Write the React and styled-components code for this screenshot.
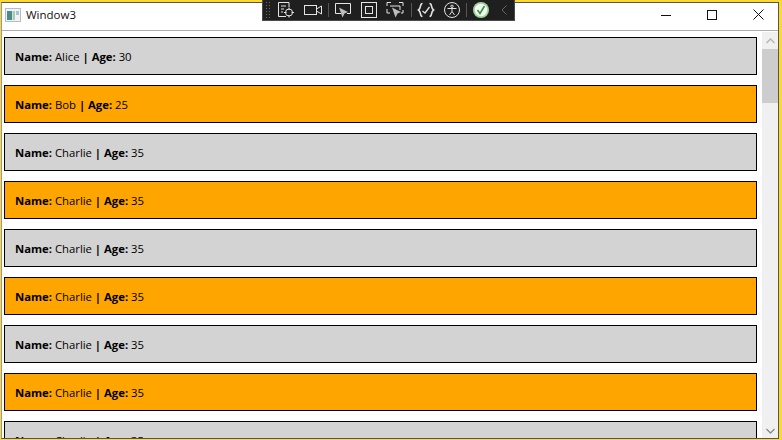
import React from 'react';
import styled, { createGlobalStyle } from 'styled-components';

const Global = createGlobalStyle`
  html, body { margin: 0; padding: 0; width: 782px; height: 440px; overflow: hidden; background: #fff; }
  #root { width: 782px; height: 440px; }
`;

const Frame = styled.div`
  position: relative;
  box-sizing: border-box;
  width: 782px;
  height: 440px;
  border-style: solid;
  border-color: #fdd835;
  border-width: 2px 3px 1px 1px;
  font-family: "Open Sans", "Noto Sans", sans-serif;
  color: #000;
`;

const Inner = styled.div`
  box-sizing: border-box;
  height: 100%;
  background: #fff;
  border: 1px solid #555;
  border-left-color: #9a9a9a;
  display: flex;
  flex-direction: column;
  overflow: hidden;
`;

const TitleBar = styled.header`
  flex: none;
  box-sizing: border-box;
  height: 28px;
  padding-bottom: 4px;
  display: flex;
  align-items: center;
  background: #fff;
  border-bottom: 1px solid #abadb3;
`;

const AppIcon = styled.svg`
  width: 16px;
  height: 16px;
  margin-left: 3px;
  flex: none;
`;

const Title = styled.span`
  margin-left: 5px;
  font-size: 11.5px;
  color: #111;
`;

const Controls = styled.div`
  margin-left: auto;
  margin-right: -3px;
  display: flex;
`;

const ControlButton = styled.div`
  width: 46px;
  height: 23px;
  display: flex;
  align-items: center;
  justify-content: center;
`;

const Body = styled.main`
  flex: 1;
  min-height: 0;
  display: flex;
`;

const List = styled.div`
  flex: 1;
  min-width: 0;
  overflow: hidden;
  padding: 6px 5px 0 2px;
  display: flex;
  flex-direction: column;
  gap: 10px;
`;

const Row = styled.div`
  flex: none;
  box-sizing: border-box;
  height: 38px;
  padding-left: 10px;
  display: flex;
  align-items: center;
  border: 1px solid #000;
  background: ${p => (p.$alt ? '#ffa500' : '#d3d3d3')};
  font-size: 11.3px;
  white-space: pre;
`;

const Strong = styled.b`
  font-weight: 700;
`;

const Scrollbar = styled.aside`
  flex: none;
  width: 16px;
  margin-top: 1px;
  background: #f0f0f0;
  display: flex;
  flex-direction: column;
`;

const ScrollArrow = styled.div`
  height: 17px;
  flex: none;
  display: flex;
  align-items: center;
  justify-content: center;
  padding-top: ${p => p.$shift || 0}px;
  box-sizing: border-box;
`;

const Thumb = styled.div`
  height: 54px;
  flex: none;
  background: #cdcdcd;
`;

const Spacer = styled.div`
  flex: 1;
`;

const Toolbar = styled.div`
  position: absolute;
  left: 261px;
  top: -2px;
  width: 253px;
  height: 21px;
  box-sizing: border-box;
  background: #1f1f1f;
  border: 1px solid #4a4a4a;
  border-top: 0;
  display: flex;
  align-items: center;
`;

const Grip = styled.div`
  width: 6px;
  height: 18px;
  margin: 0 5px 0 2px;
  flex: none;
  background-image: radial-gradient(#6a6a6a 0.6px, transparent 0.8px);
  background-size: 3px 3px;
`;

const ToolIcon = styled.svg`
  width: ${p => p.$w || 20}px;
  height: 18px;
  flex: none;
  margin-right: ${p => p.$gap || 0}px;
  fill: none;
  stroke: ${p => p.$stroke || '#e4e4e4'};
  stroke-width: 1;
`;

const ToolSep = styled.div`
  width: 1px;
  height: 14px;
  margin-right: ${p => p.$gap}px;
  background: #555;
  flex: none;
`;

const people = [
  ['Alice', 30], ['Bob', 25], ['Charlie', 35], ['Charlie', 35], ['Charlie', 35],
  ['Charlie', 35], ['Charlie', 35], ['Charlie', 35], ['Charlie', 35],
];

export default function App() {
  return (
    <>
      <Global />
      <Frame>
        <Inner>
          <TitleBar>
            <AppIcon viewBox="0 0 16 16">
              <rect x="0.5" y="1.5" width="15" height="13" fill="#f2f2f2" stroke="#b4bcc4" />
              <rect x="2" y="4" width="5" height="9" fill="#4d8a8c" />
              <rect x="7.5" y="4" width="2.5" height="9" fill="#a8cbb8" />
              <rect x="11" y="4" width="3" height="4" fill="#a9c0d6" />
            </AppIcon>
            <Title>Window3</Title>
            <Controls>
              <ControlButton>
                <svg width="10" height="10" viewBox="0 0 10 10"><path d="M0 5.5H10" stroke="#111" /></svg>
              </ControlButton>
              <ControlButton>
                <svg width="10" height="10" viewBox="0 0 10 10"><rect x="0.5" y="0.5" width="9" height="9" fill="none" stroke="#111" /></svg>
              </ControlButton>
              <ControlButton>
                <svg width="11" height="11" viewBox="0 0 11 11"><path d="M0.5 0.5L10.5 10.5M10.5 0.5L0.5 10.5" stroke="#111" /></svg>
              </ControlButton>
            </Controls>
          </TitleBar>
          <Body>
            <List>
              {people.map(([name, age], i) => (
                <Row key={i} $alt={i % 2 === 1}>
                  <Strong>Name: </Strong>{name}<Strong> | Age: </Strong>{age}
                </Row>
              ))}
            </List>
            <Scrollbar>
              <ScrollArrow>
                <svg width="9" height="6" viewBox="0 0 9 6"><path d="M0.5 5L4.5 1L8.5 5" fill="none" stroke="#b5b5b5" strokeWidth="1.3" /></svg>
              </ScrollArrow>
              <Thumb />
              <Spacer />
              <ScrollArrow $shift={2}>
                <svg width="9" height="6" viewBox="0 0 9 6"><path d="M0.5 1L4.5 5L8.5 1" fill="none" stroke="#8a8a8a" strokeWidth="1.3" /></svg>
              </ScrollArrow>
            </Scrollbar>
          </Body>
        </Inner>
        <Toolbar>
          <Grip />
          <ToolIcon viewBox="0 0 20 18" $gap={7}>
            <path d="M10 15.5H2.5V1.5H13V6" />
            <path d="M5 5H10M5 8H8M5 11H7" />
            <circle cx="13" cy="11.5" r="3.5" />
            <path d="M13 6.5V9M13 14V16.5M8 11.5H10.5M15.5 11.5H18" />
          </ToolIcon>
          <ToolIcon viewBox="0 0 20 18" $gap={5}>
            <rect x="1.5" y="4.5" width="12" height="9" />
            <path d="M13.5 8L18.5 5V13L13.5 10" />
          </ToolIcon>
          <ToolSep $gap={4} />
          <ToolIcon viewBox="0 0 20 18" $gap={7}>
            <path d="M8 12.5H2.5V2.5H17.5V12.5H14" />
            <path d="M6 6.5L15 11L11.5 12.5L9.5 16.5Z" fill="#bdbdbd" stroke="none" />
          </ToolIcon>
          <ToolIcon viewBox="0 0 18 18" $w={18} $gap={7}>
            <rect x="1.5" y="1.5" width="15" height="15" />
            <rect x="5.5" y="5.5" width="7" height="7" />
          </ToolIcon>
          <ToolIcon viewBox="0 0 20 18" $gap={6}>
            <path d="M2 5V1.5H6M14 1.5H18V5M2 8V12H5M18 9V12H16" />
            <path d="M5 5H15V9" />
            <path d="M7 6.5L16 11L12.5 12.5L10.5 16.5Z" fill="#bdbdbd" stroke="none" />
          </ToolIcon>
          <ToolSep $gap={5} />
          <ToolIcon viewBox="0 0 18 18" $w={18} $gap={8}>
            <path d="M5.5 2.5C2.5 2.5 4.5 7 1.5 9C4.5 11 2.5 15.5 5.5 15.5M12.5 2.5C15.5 2.5 13.5 7 16.5 9C13.5 11 15.5 15.5 12.5 15.5" strokeWidth="1.6" />
            <path d="M5.5 10L8 12L12.5 6" strokeWidth="1.3" />
          </ToolIcon>
          <ToolIcon viewBox="0 0 18 18" $w={18} $gap={5}>
            <circle cx="9" cy="9" r="7.5" />
            <circle cx="9" cy="5.3" r="1.2" />
            <path d="M4.5 7.5H13.5M9 7.5V10.5M9 10.5L6.5 14M9 10.5L11.5 14" />
          </ToolIcon>
          <ToolSep $gap={5} />
          <ToolIcon viewBox="0 0 18 18" $w={18} $gap={9} $stroke="none">
            <circle cx="9" cy="9" r="8" fill="#9fd39a" />
            <circle cx="9" cy="9" r="6.2" fill="#f4f7f3" />
            <path d="M5.5 9L8 12.5L12.5 5" fill="none" stroke="#2d9a3a" strokeWidth="1.6" />
          </ToolIcon>
          <ToolIcon viewBox="0 0 10 18" $w={10} $stroke="#666">
            <path d="M7.5 4.5L3 9L7.5 13.5" />
          </ToolIcon>
        </Toolbar>
      </Frame>
    </>
  );
}
